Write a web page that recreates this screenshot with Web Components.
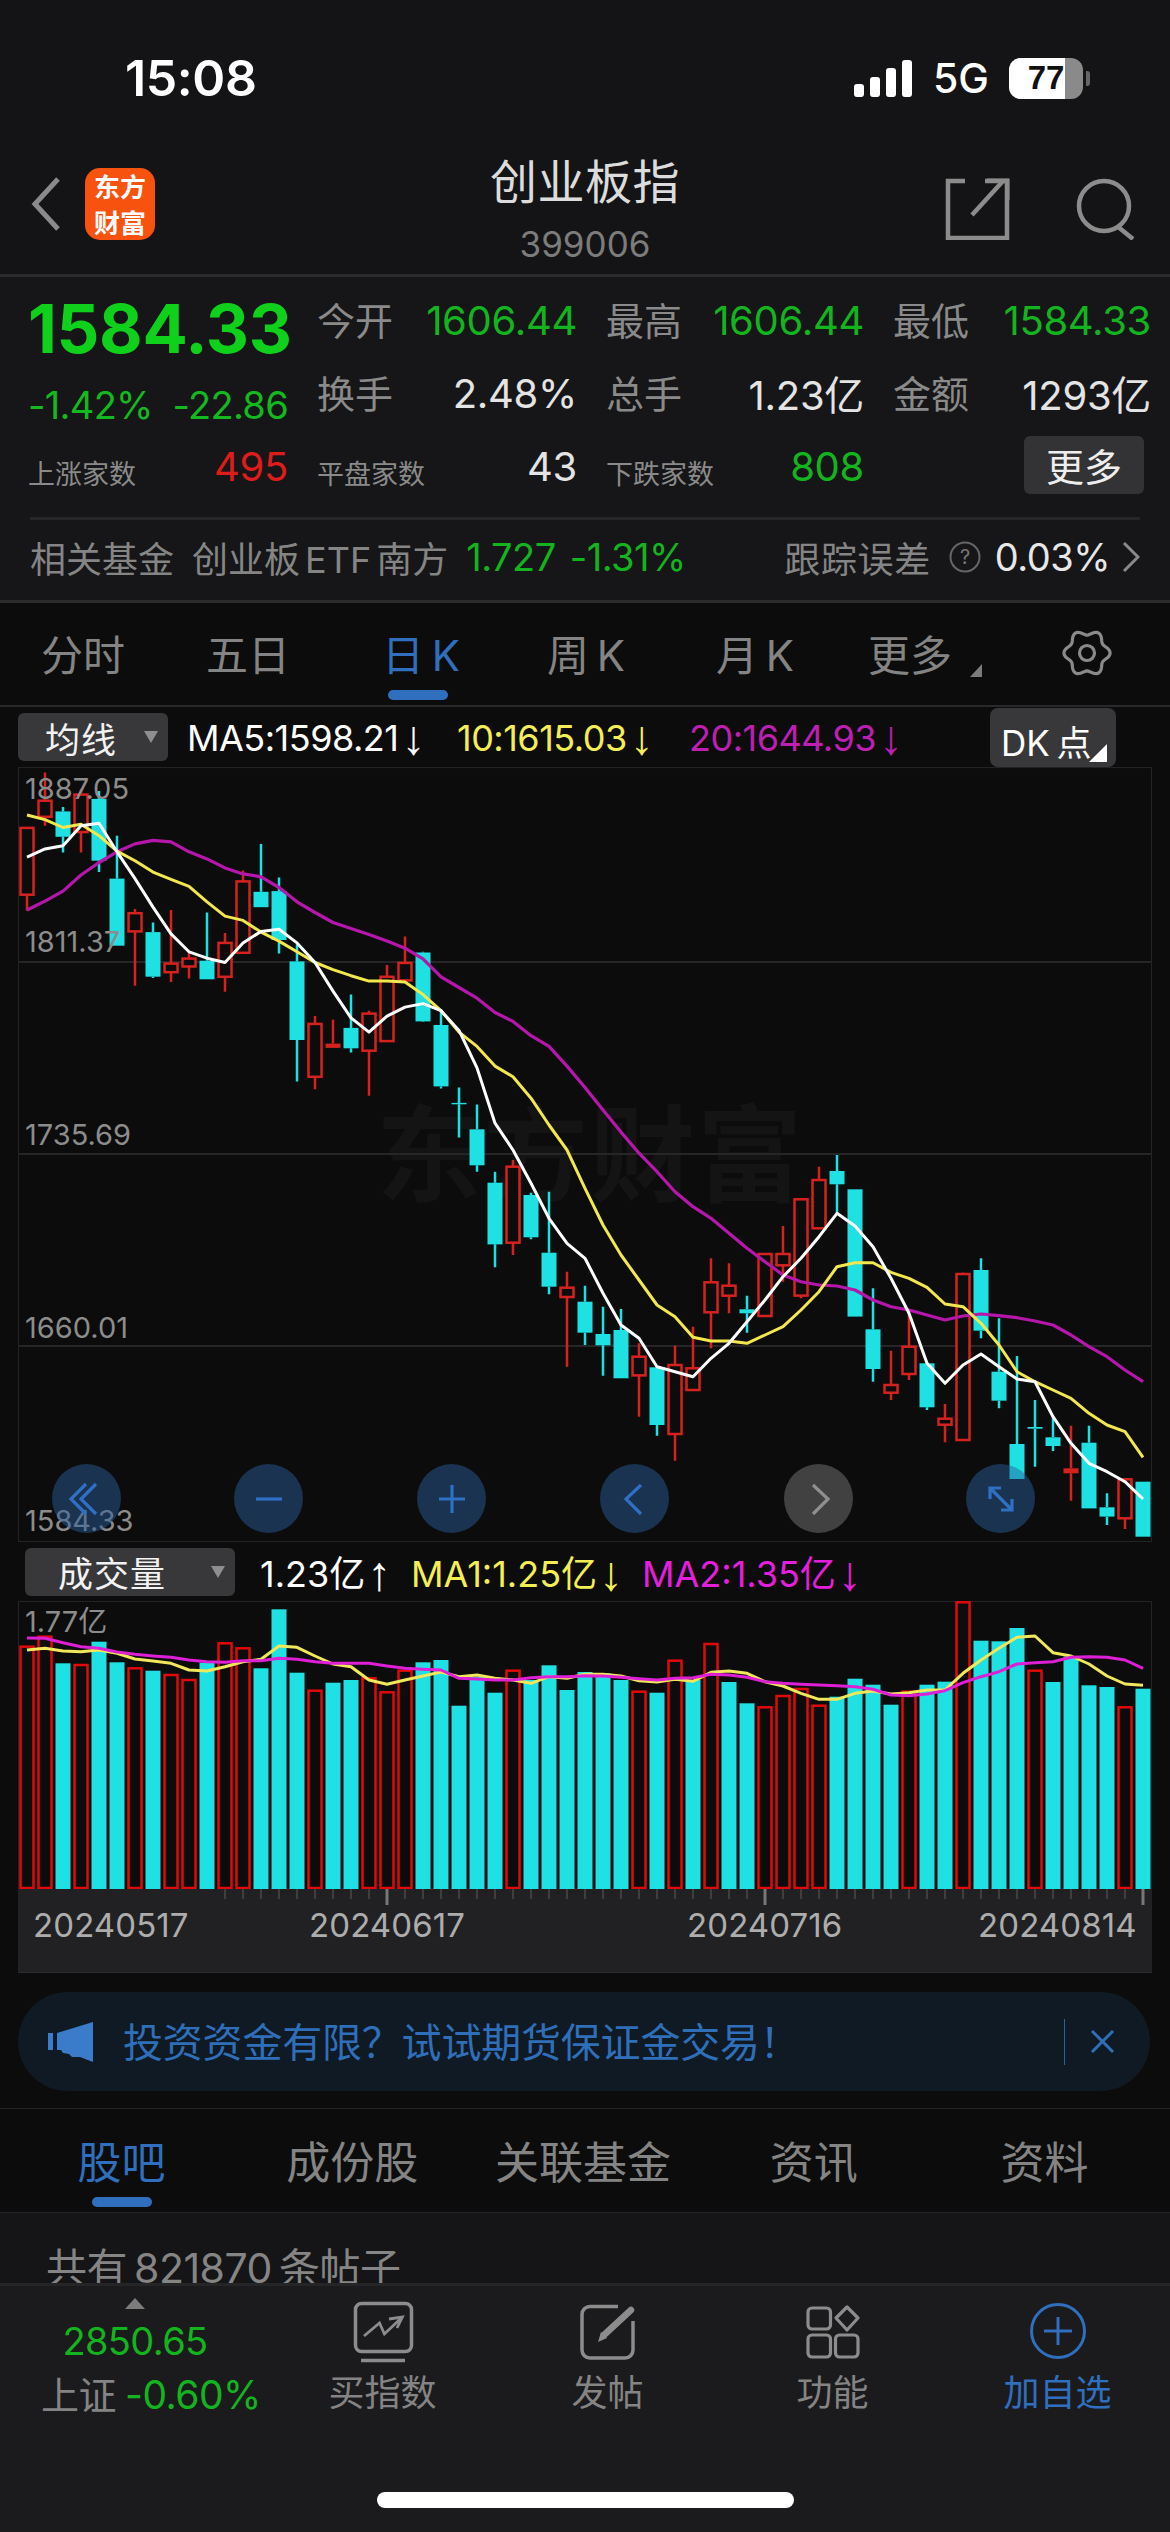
<!DOCTYPE html>
<html lang="zh">
<head>
<meta charset="utf-8">
<title>创业板指</title>
<style>
    html, body
    {
        margin: 0;
        padding: 0;
        background: #0c0c0c;
    }
    body
    {
        width: 1170px;
        height: 2532px;
        overflow: hidden;
        display: flex;
        flex-direction: column;
        font-family: Inter, "Noto Sans CJK SC", sans-serif;
        color: #fff;
    }
</style>
</head>
<body>
    <status-bar></status-bar>
    <quote-header></quote-header>

    <quote-stats>
        <stat-cell label="今开" tone="up">1606.44</stat-cell>
        <stat-cell label="最高" tone="up">1606.44</stat-cell>
        <stat-cell label="最低" tone="up">1584.33</stat-cell>
        <stat-cell label="换手">2.48%</stat-cell>
        <stat-cell label="总手">1.23亿</stat-cell>
        <stat-cell label="金额">1293亿</stat-cell>
        <stat-cell label="平盘家数" small>43</stat-cell>
        <stat-cell label="下跌家数" small tone="up">808</stat-cell>
    </quote-stats>

    <fund-row></fund-row>
    <period-tabs></period-tabs>
    <kline-panel></kline-panel>
    <volume-panel></volume-panel>
    <promo-banner>投资资金有限？试试期货保证金交易！</promo-banner>
    <info-tabs></info-tabs>
    <post-peek>共有 821870 条帖子</post-peek>
    <bottom-bar></bottom-bar>

<script>
// y positions were read off the reference, two source scales for the top chart
const ya = v => 600 + v / 2.8;
const yb = v => 1150 + v / 3;
const yv = v => 1540 + v / 3;
const cx = i => 27 + 18 * i;

const CYAN = '#1fe0e2';
const RED = '#d5221f';

// [up?, high, bodyTop, bodyBottom, low]
const CANDLES_A = [
    [1,638,638,825,870],[1,483,562,607,632],[0,580,592,663,707],[1,530,545,650,707],
    [0,535,557,730,762],[0,660,780,968,968],[1,865,877,928,1080],[0,903,930,1055,1058],
    [1,868,1018,1042,1070],[1,985,1004,1026,1060],[0,875,1010,1062,1062],[1,932,960,1055,1097],
    [1,757,788,988,990],[0,683,817,860,860],[0,777,815,952,990],[0,965,1012,1232,1348],
    [1,1165,1187,1335,1370],[2,1175,1242,1254,1254],[0,1105,1198,1255,1267],[1,1150,1158,1262,1388],
    [1,1022,1055,1235,1237],[1,942,1016,1065,1070],[0,985,987,1180,1182],[0,1145,1190,1362,1368],
    [0,1365,1408,1412,1505]
].map(c => [c[0], ya(c[1]), ya(c[2]), ya(c[3]), ya(c[4])]);

const CANDLE_25 = [0, ya(1413), ya(1482), yb(46), yb(65)];

const CANDLES_B = [
    [0,65,98,283,352],[1,30,50,278,315],[0,128,135,262,268],[0,125,308,410,433],
    [1,365,413,441,650],[0,407,455,548,585],[0,470,552,586,677],[0,477,540,685,685],
    [1,580,620,676,800],[0,650,652,825,857],[1,587,645,852,932],[1,530,655,720,722],
    [1,325,397,487,595],[1,340,407,437,490],[0,437,478,490,548],[1,310,312,498,500],
    [1,228,312,346,395],[1,145,148,437,445],[1,50,90,235,237],[0,15,63,103,190],
    [0,118,118,500,500],[0,415,538,657,695],[1,602,705,728,750],[1,490,590,672,690],
    [0,637,640,772,780],[1,762,806,824,877],[1,368,372,870,870],[0,325,360,542,565],
    [0,505,665,752,775],[0,618,882,987,987],[0,750,831,836,950],[0,800,862,888,903],
    [2,827,955,970,1052],[0,827,878,1075,1075],[0,1030,1072,1100,1125],[1,985,988,1105,1137],
    [0,995,995,1160,1160]
].map(c => [c[0], yb(c[1]), yb(c[2]), yb(c[3]), yb(c[4])]);

const CANDLES = [...CANDLES_A, CANDLE_25, ...CANDLES_B];

const MA5 = [
    ...[720,697,688,632,625,705,780,860,935,985,1003,1015,960,928,922,960,1015,1095,1170,1210,1165,1140,1130,1150,1205,1310,1465].map(ya),
    ...[0,100,205,280,325,430,525,565,650,665,680,625,580,515,450,380,325,260,190,228,290,385,490,640,700,645,612,650,687,695,800,880,940,965,995,1047].map(yb)
];
const MA10 = [
    ...[602,615,637,628,660,703,730,762,782,802,845,885,897,930,955,985,1015,1035,1052,1067,1067,1070,1105,1150,1210,1250,1305,1335,1395,1470,1540].map(ya),
    ...[115,225,315,390,465,500,562,573,573,580,555,530,480,425,350,338,338,367,385,412,462,470,520,585,665,695,720,745,790,825,845,922].map(yb)
];
const MA20 = [
    ...[868,843,815,770,735,705,683,673,677,705,725,750,767,775,805,845,875,903,920,937,955,975,1005,1055,1085,1115,1155,1180,1220,1250,1305,1365,1428,1490,1549].map(ya),
    ...[65,125,170,205,250,295,335,375,395,405,408,420,450,470,480,495,510,498,492,497,503,513,525,555,590,620,660,695].map(yb)
];

const VOL_UP = [1,1,0,1,0,0,1,0,1,1,0,1,1,0,0,0,1,0,0,1,1,1,0,0,0,0,0,1,0,0,0,0,0,0,1,0,1,0,1,0,0,1,1,1,1,0,0,0,0,1,0,0,1,0,0,0,1,0,0,0,0,1,0];
const VOL = [320,290,370,375,305,367,385,392,405,420,368,310,325,385,208,398,452,428,420,415,457,392,367,360,497,410,458,392,420,376,450,396,400,420,455,458,362,420,312,426,490,502,468,447,497,470,416,434,494,455,434,425,187,302,304,264,392,426,350,436,441,502,446];
const VOL_MA1 = [330,325,333,335,330,340,357,363,370,390,393,380,365,358,318,322,348,372,380,420,433,420,408,396,410,405,415,420,430,410,415,403,403,408,422,426,418,424,397,393,400,425,438,460,478,478,460,453,462,458,450,450,400,360,325,292,288,338,348,372,408,432,436];
const VOL_MA2 = [294,295,308,320,325,336,343,348,352,360,365,367,362,362,355,358,365,370,370,370,378,385,388,390,415,417,420,420,413,410,410,407,408,412,416,420,415,413,403,405,412,425,430,433,435,437,440,448,465,467,462,452,428,410,395,372,368,365,352,350,352,360,385];

function polyline(values, color, width)
{
    let pts = values.map((y, i) => `${cx(i)},${y.toFixed(1)}`).join(' ');
    return `<polyline points="${pts}" fill="none" stroke="${color}" stroke-width="${width}" stroke-linejoin="round"/>`;
}

function host(el, html)
{
    el.attachShadow({mode: 'open'}).innerHTML = html;
}


class StatusBar extends HTMLElement
{
    connectedCallback()
    {
        host(this, `
        <style>
            :host { display: flex; height: 130px; background: #141416; box-sizing: border-box; padding: 48px 80px 22px 125px; align-items: center; justify-content: space-between; color: #fff; }
            .time { font: 600 50px Inter, sans-serif; letter-spacing: -0.4px; }
            .right { display: flex; align-items: center; }
            .five { font: 500 41px Inter, sans-serif; margin: 0 20px 0 21px; }
            .batt { position: relative; width: 74px; height: 41px; border-radius: 12px; overflow: hidden; background: #8a8a8a; display: flex; align-items: center; justify-content: center; }
            .level { position: absolute; left: 0; top: 0; bottom: 0; width: 56px; background: #fff; }
            .pct { position: relative; font: 700 33px "Liberation Sans", sans-serif; color: #111; }
            .tip { width: 4px; height: 15px; margin-left: 3px; border-radius: 0 3px 3px 0; background: #666; }
        </style>
        <span class="time">15:08</span>
        <div class="right">
            <svg width="58" height="37" viewBox="0 0 58 37" fill="#fff">
                <rect x="0" y="24" width="10" height="13" rx="3"/>
                <rect x="16" y="17" width="10" height="20" rx="3"/>
                <rect x="32" y="8" width="10" height="29" rx="3"/>
                <rect x="48" y="0" width="10" height="37" rx="3"/>
            </svg>
            <span class="five">5G</span>
            <div class="batt"><div class="level"></div><span class="pct">77</span></div>
            <div class="tip"></div>
        </div>`);
    }
}
customElements.define('status-bar', StatusBar);


class QuoteHeader extends HTMLElement
{
    connectedCallback()
    {
        host(this, `
        <style>
            :host { display: grid; grid-template-columns: 300px 1fr 300px; height: 147px; box-sizing: border-box; background: #141416; border-bottom: 3px solid #2b2b2d; }
            .left { display: flex; align-items: center; padding: 8px 0 0 31px; gap: 24px; height: 140px; box-sizing: border-box; }
            .logo { width: 70px; height: 72px; border-radius: 15px; background: #f8520f; color: #fff; font: 700 26px/36px "Noto Sans CJK SC", sans-serif; text-align: center; }
            .mid { text-align: center; padding-top: 16px; }
            .title { font: 400 47px/66px "Noto Sans CJK SC", sans-serif; color: #dcdcdc; letter-spacing: 0.5px; }
            .code { font: 400 35px/42px Inter, sans-serif; color: #7c7c7c; margin-top: 11px; }
            .right { display: flex; align-items: center; justify-content: flex-end; padding: 18px 33px 0 0; gap: 65px; height: 140px; box-sizing: border-box; }
        </style>
        <div class="left">
            <svg width="30" height="54" viewBox="0 0 30 54" fill="none" stroke="#8a8a8a" stroke-width="5"><path d="M27 2 L4 27 L27 52"/></svg>
            <div class="logo">东方<br>财富</div>
        </div>
        <div class="mid">
            <div class="title">创业板指</div>
            <div class="code">399006</div>
        </div>
        <div class="right">
            <svg width="65" height="62" viewBox="0 0 65 62" fill="none" stroke="#8c8c8c" stroke-width="4.5">
                <path d="M20 3 H3 V60 H62 V3 H40"/>
                <path d="M27 37 L58 3"/>
                <path d="M42 2 H63 V22" stroke-width="3"/>
            </svg>
            <svg width="62" height="62" viewBox="0 0 62 62" fill="none" stroke="#8c8c8c" stroke-width="4.5">
                <circle cx="29" cy="28" r="25"/>
                <path d="M42 48 L58 61"/>
            </svg>
        </div>`);
    }
}
customElements.define('quote-header', QuoteHeader);


class StatCell extends HTMLElement
{
    connectedCallback()
    {
        let color = this.getAttribute('tone') === 'up' ? '#14b41f' : '#e4e4e4';
        let small = this.hasAttribute('small');
        host(this, `
        <style>
            :host { display: flex; align-items: center; justify-content: space-between; }
            .label { color: #8a8a8a; font: 400 ${small ? 27 : 38}px "Noto Sans CJK SC", sans-serif; ${small ? 'padding-top: 12px;' : 'margin-top: -4px;'} }
            .value { color: ${color}; font: 400 40px Inter, "Noto Sans CJK SC", sans-serif; letter-spacing: -0.3px; }
        </style>
        <span class="label">${this.getAttribute('label')}</span>
        <span class="value"><slot></slot></span>`);
    }
}
customElements.define('stat-cell', StatCell);


class QuoteStats extends HTMLElement
{
    connectedCallback()
    {
        // the cells keep their source order, each one goes to its grid slot
        let kids = [...this.children];
        ['a1', 'a2', 'a3', 'b1', 'b2', 'b3', 'c1', 'c2'].forEach((name, i) => kids[i].slot = name);

        host(this, `
        <style>
            :host { display: grid; grid-template-columns: 260px 260px 258px 258px; column-gap: 29px; grid-template-rows: 73px 72px 74px; height: 240px; box-sizing: border-box; padding: 7px 20px 0 28px; background: #161618; }
            .price { font: 700 67px/73px Inter, sans-serif; color: #0fd11c; padding-top: 8px; white-space: nowrap; letter-spacing: -0.3px; }
            .chg { font: 400 38px Inter, sans-serif; color: #13b91e; display: flex; justify-content: space-between; align-items: center; padding-top: 24px; letter-spacing: -0.7px; white-space: nowrap; }
            .rise { display: flex; justify-content: space-between; align-items: center; }
            .rise b { font: 400 27px "Noto Sans CJK SC", sans-serif; color: #8a8a8a; padding-top: 12px; }
            .rise i { font: 400 40px Inter, sans-serif; color: #de1c1c; letter-spacing: -0.3px; }
            button { justify-self: end; align-self: center; margin-top: -3px; margin-right: 7px; width: 120px; height: 58px; border: 0; border-radius: 6px; background: #333336; color: #eee; font: 400 38px "Noto Sans CJK SC", sans-serif; padding: 0; }
        </style>
        <div class="price">1584.33</div>
        <slot name="a1"></slot><slot name="a2"></slot><slot name="a3"></slot>
        <div class="chg"><span>-1.42%</span><span>-22.86</span></div>
        <slot name="b1"></slot><slot name="b2"></slot><slot name="b3"></slot>
        <div class="rise"><b>上涨家数</b><i>495</i></div>
        <slot name="c1"></slot><slot name="c2"></slot>
        <button>更多</button>`);
    }
}
customElements.define('quote-stats', QuoteStats);


class FundRow extends HTMLElement
{
    connectedCallback()
    {
        host(this, `
        <style>
            :host { display: block; height: 86px; box-sizing: border-box; background: #161618; padding: 0 30px; border-bottom: 3px solid #2b2b2d; }
            .row { display: flex; align-items: center; height: 83px; border-top: 3px solid #262628; box-sizing: border-box; padding-bottom: 6px; font: 400 36px Inter, "Noto Sans CJK SC", sans-serif; color: #858585; white-space: nowrap; }
            .fund { margin-left: 18px; }
            .fund i { font-style: normal; margin: 0 5px; }
            .g { color: #14b41f; margin-left: 18px; letter-spacing: -0.5px; font-size: 38px; }
            .g + .g { margin-left: 14px; }
            .trk { margin-left: auto; letter-spacing: 0.6px; }
            .w { color: #e8e8e8; margin-left: 14px; letter-spacing: -0.5px; font-size: 38px; }
            svg { margin-left: 18px; }
            svg + .w + svg { margin-left: 12px; }
        </style>
        <div class="row">
            <span>相关基金</span>
            <span class="fund">创业板<i>ETF</i>南方</span>
            <span class="g">1.727</span><span class="g">-1.31%</span>
            <span class="trk">跟踪误差</span>
            <svg width="32" height="32" viewBox="0 0 32 32"><circle cx="16" cy="16" r="14.5" fill="none" stroke="#666" stroke-width="2"/><text x="16" y="23" text-anchor="middle" font-family="Inter, sans-serif" font-size="20" fill="#777">?</text></svg>
            <span class="w">0.03%</span>
            <svg width="18" height="32" viewBox="0 0 18 32" fill="none" stroke="#8a8a8a" stroke-width="3"><path d="M2 2 L16 16 L2 30"/></svg>
        </div>`);
    }
}
customElements.define('fund-row', FundRow);


class PeriodTabs extends HTMLElement
{
    connectedCallback()
    {
        // wavy six lobed cog, lobes either side of the top
        let cog = [];
        for(let k = 0; k < 72; k++)
        {
            let t = k * Math.PI / 36;
            let r = 20.5 - 2.6 * Math.cos(6 * t);
            cog.push(`${(r * Math.sin(t)).toFixed(2)},${(-r * Math.cos(t)).toFixed(2)}`);
        }

        let tabs = [['分时', 166], ['五日', 164], ['日 K', 182, 1], ['周 K', 148], ['月 K', 190], ['更多', 120]];
        host(this, `
        <style>
            :host { display: flex; height: 104px; box-sizing: border-box; background: #0c0c0c; border-bottom: 2px solid #29292b; font: 400 42px Inter, "Noto Sans CJK SC", sans-serif; color: #848484; }
            .t { position: relative; display: flex; align-items: center; justify-content: center; height: 98px; white-space: nowrap; word-spacing: -4px; }
            .on { color: #2f6fbd; }
            .on::after { content: ""; position: absolute; left: 58px; width: 60px; bottom: 1px; height: 10px; border-radius: 5px; background: #2f6fbd; }
            .tri { position: absolute; right: -12px; bottom: 24px; width: 0; height: 0; border-left: 12px solid transparent; border-bottom: 13px solid #7c7c7c; }
            svg { margin: 0 0 2px 91px; align-self: center; }
        </style>
        ${tabs.map((t, i) => `<div class="t${t[2] ? ' on' : ''}" style="width:${t[1]}px">${t[0]}${i === 5 ? '<i class="tri"></i>' : ''}</div>`).join('')}
        <svg width="52" height="52" viewBox="-26 -26 52 52" fill="none" stroke="#8a8a8a" stroke-width="3.2" stroke-linejoin="round">
            <polygon points="${cog.join(' ')}"/>
            <circle r="7.5"/>
        </svg>`);
    }
}
customElements.define('period-tabs', PeriodTabs);


class ChartLegend extends HTMLElement
{
    connectedCallback()
    {
        host(this, `
        <style>
            :host { display: flex; align-items: center; position: relative; font: 400 36px Inter, "Noto Sans CJK SC", sans-serif; white-space: nowrap; background: #0c0c0c; letter-spacing: -0.5px; }
            ::slotted(*) { flex: none; }
        </style>
        <slot></slot>`);
    }
}
customElements.define('chart-legend', ChartLegend);


class LegendSelect extends HTMLElement
{
    connectedCallback()
    {
        host(this, `
        <style>
            :host { display: flex; align-items: center; position: relative; height: 48px; box-sizing: border-box; border-radius: 6px; background: #38383a; color: #f2f2f2; font: 400 35px "Noto Sans CJK SC", sans-serif; letter-spacing: 1px; }
            i { position: absolute; right: 10px; top: 18px; width: 0; height: 0; border-left: 7px solid transparent; border-right: 7px solid transparent; border-top: 12px solid #8e8e8e; }
        </style>
        <slot></slot><i></i>`);
    }
}
customElements.define('legend-select', LegendSelect);


class KlinePanel extends HTMLElement
{
    connectedCallback()
    {
        let marks = '';
        for(let i = 0; i < CANDLES.length; i++)
        {
            let [kind, high, top, bottom, low] = CANDLES[i];
            let x = cx(i);
            let color = kind ? RED : CYAN;
            marks += `<path d="M${x} ${high.toFixed(1)}V${top.toFixed(1)}M${x} ${bottom.toFixed(1)}V${low.toFixed(1)}" stroke="${color}" stroke-width="2.5"/>`;
            if(kind === 1) marks += `<rect x="${x - 6.5}" y="${top.toFixed(1)}" width="13" height="${(bottom - top).toFixed(1)}" fill="#0c0c0c" stroke="${RED}" stroke-width="2.5"/>`;
            else marks += `<rect x="${x - 7.5}" y="${top.toFixed(1)}" width="15" height="${(bottom - top).toFixed(1)}" fill="${color}"/>`;
        }

        let labels = [['1887.05', 10], ['1811.37', 163], ['1735.69', 356], ['1660.01', 549], ['1584.33', 742]];
        let btns = [
            [68, 'M23 9 L8 24 L23 39 M33 9 L18 24 L33 39', 'b'],
            [250, 'M11 24 H37', 'b'],
            [433, 'M11 24 H37 M24 10 V38', 'b'],
            [616, 'M30 10 L15 24 L30 39', 'b'],
            [800, 'M18 10 L33 24 L18 39', 'g'],
            [982, 'M13 13 L35 35 M13 24 V13 H24 M24 35 H35 V24', 'b']
        ];

        host(this, `
        <style>
            :host { display: block; background: #0c0c0c; }
            chart-legend { height: 60px; padding: 2px 0 0 18px; box-sizing: border-box; color: #fff; }
            legend-select { margin-top: -2px; }
            .e { width: 270px; }
            .a { font: 400 48px/36px "Liberation Sans", sans-serif; margin-left: 3px; vertical-align: -3px; }
            .dk { position: absolute; left: 990px; top: 1px; width: 126px; height: 59px; border-radius: 8px; background: #38383a; font: 400 35px Inter, "Noto Sans CJK SC", sans-serif; letter-spacing: 0; box-sizing: border-box; padding: 7px 0 0 11px; word-spacing: -3px; }
            .dk i { position: absolute; right: 9px; bottom: 5px; width: 0; height: 0; border-left: 18px solid transparent; border-bottom: 18px solid #fff; }
            .plot { position: relative; margin-left: 18px; width: 1134px; height: 775px; box-sizing: border-box; }
            svg.chart { position: absolute; left: 0; top: 0; }
            .wm { position: absolute; left: 358px; top: 304px; font: 700 105px "Noto Sans CJK SC", sans-serif; color: #141414; white-space: nowrap; letter-spacing: 2px; }
            .lab { position: absolute; left: 7px; font: 400 29px/34px Inter, sans-serif; color: #8c8c8c; }
            .btn { position: absolute; top: 697px; width: 69px; height: 69px; border-radius: 50%; display: flex; align-items: center; justify-content: center; }
            .b { background: rgba(42, 94, 156, 0.48); }
            .g { background: rgba(110, 110, 110, 0.55); }
        </style>
        <chart-legend>
            <legend-select style="width:150px;padding-left:27px">均线</legend-select>
            <span class="e" style="margin-left:19px">MA5:1598.21<span class="a">↓</span></span>
            <span class="e" style="width:232px;color:#f4ee55">10:1615.03<span class="a">↓</span></span>
            <span class="e" style="color:#bd1fb2">20:1644.93<span class="a">↓</span></span>
            <div class="dk">DK 点<i></i></div>
        </chart-legend>
        <div class="plot">
            <div class="wm">东方财富</div>
            <svg class="chart" width="1134" height="775" viewBox="18 767 1134 775">
                <rect x="18.5" y="767.5" width="1133" height="774" fill="none" stroke="#232325" stroke-width="1.2"/>
                <path d="M19 962H1151M19 1154H1151M19 1346H1151" stroke="#262628" stroke-width="2"/>
                ${marks}
                ${polyline(MA20, '#b517aa', 3.2)}
                ${polyline(MA10, '#f2e84e', 3)}
                ${polyline(MA5, '#ffffff', 3)}
            </svg>
            ${labels.map(l => `<span class="lab" style="top:${l[1] - 5}px">${l[0]}</span>`).join('')}
            ${btns.map(b => `<div class="btn ${b[2]}" style="left:${b[0] - 34}px"><svg width="48" height="48" viewBox="0 0 48 48" fill="none" stroke="${b[2] === 'g' ? '#8f8f8f' : '#2f6fc4'}" stroke-width="3.2"><path d="${b[1]}"/></svg></div>`).join('')}
        </div>`);
    }
}
customElements.define('kline-panel', KlinePanel);


class VolumePanel extends HTMLElement
{
    connectedCallback()
    {
        let bars = '';
        let ticks = '';
        let volRed = '#e00a0a';
        for(let i = 0; i < VOL.length; i++)
        {
            let x = cx(i);
            let top = yv(VOL[i]);
            if(VOL_UP[i]) bars += `<rect x="${x - 6.5}" y="${top.toFixed(1)}" width="13" height="${(1888 - top).toFixed(1)}" fill="#0c0c0c" stroke="${volRed}" stroke-width="2.5"/>`;
            else bars += `<rect x="${x - 7.5}" y="${top.toFixed(1)}" width="15" height="${(1889 - top).toFixed(1)}" fill="${CYAN}"/>`;
            if(i >= 11)
            {
                let major = i === 20 || i === 41 || i === 62;
                ticks += `<rect x="${x - (major ? 1.5 : 0.5)}" y="0" width="${major ? 3 : 1}" height="${major ? 16 : 10}" fill="${major ? '#777' : '#5c5c5c'}"/>`;
            }
        }

        let dates = [['20240517', 15], ['20240617', 291], ['20240716', 669], ['20240814', 960]];

        host(this, `
        <style>
            :host { display: block; background: #0c0c0c; }
            chart-legend { height: 59px; padding: 0 0 2px 25px; box-sizing: border-box; color: #fff; letter-spacing: 0; }
            legend-select { margin-top: 2px; }
            .e { flex: none; }
            .a { font: 400 48px/36px "Liberation Sans", sans-serif; margin-left: 2px; vertical-align: -3px; }
            .plot { position: relative; margin-left: 18px; width: 1134px; height: 288px; }
            svg.chart { position: absolute; left: 0; top: 0; }
            .lab { position: absolute; left: 7px; top: 3px; font: 400 29px/36px Inter, "Noto Sans CJK SC", sans-serif; color: #8c8c8c; }
            .axis { position: relative; margin-left: 18px; width: 1134px; height: 84px; background: #212123; border-bottom: 1px solid #2b2b2d; box-sizing: border-box; }
            .axis svg { position: absolute; left: 0; top: 0; }
            .axis span { position: absolute; top: 17px; font: 400 33px/38px Inter, sans-serif; color: #adadad; letter-spacing: 0.1px; }
        </style>
        <chart-legend>
            <legend-select style="width:210px;padding-left:33px">成交量</legend-select>
            <span class="e" style="margin-left:25px;width:151px">1.23亿<span class="a">↑</span></span>
            <span class="e" style="width:231px;color:#f4ee55">MA1:1.25亿<span class="a">↓</span></span>
            <span class="e" style="color:#e31fdc">MA2:1.35亿<span class="a">↓</span></span>
        </chart-legend>
        <div class="plot">
            <svg class="chart" width="1134" height="288" viewBox="18 1601 1134 288">
                <rect x="18.5" y="1601.5" width="1133" height="288" fill="none" stroke="#232325" stroke-width="1.2"/>
                ${bars}
                ${polyline(VOL_MA1.map(yv), '#f0e85a', 3)}
                ${polyline(VOL_MA2.map(yv), '#dd1fd6', 3)}
            </svg>
            <span class="lab">1.77亿</span>
        </div>
        <div class="axis">
            <svg width="1134" height="20" viewBox="18 0 1134 20">${ticks}</svg>
            ${dates.map(d => `<span style="left:${d[1]}px">${d[0]}</span>`).join('')}
        </div>`);
    }
}
customElements.define('volume-panel', VolumePanel);


class PromoBanner extends HTMLElement
{
    connectedCallback()
    {
        host(this, `
        <style>
            :host { display: flex; align-items: center; position: relative; height: 99px; margin: 19px 20px 17px 18px; padding-left: 29px; border-radius: 50px; background: #101a25; color: #2f6fb9; font: 400 40px "Noto Sans CJK SC", sans-serif; white-space: nowrap; box-sizing: border-box; }
            .spk { margin-right: 29px; flex: none; }
            .txt { flex: 1; letter-spacing: -0.2px; padding-bottom: 3px; }
            .sep { width: 1.5px; height: 46px; background: #2b5f9e; }
            .x { margin: 0 35px 0 25px; }
        </style>
        <svg class="spk" width="47" height="40" viewBox="0 0 47 40" fill="#3a7cc9">
            <rect x="1" y="11" width="5" height="17"/>
            <path d="M10 11 L46 0 V40 L33 35 L25 35 L22 32 L16 31 L14 28 H10 Z"/>
        </svg>
        <span class="txt"><slot></slot></span>
        <div class="sep"></div>
        <svg class="x" width="25" height="25" viewBox="0 0 25 25" stroke="#2f6fb9" stroke-width="3"><path d="M2 2 L23 23 M23 2 L2 23"/></svg>`);
    }
}
customElements.define('promo-banner', PromoBanner);


class InfoTabs extends HTMLElement
{
    connectedCallback()
    {
        let tabs = ['股吧', '成份股', '关联基金', '资讯', '资料'];
        host(this, `
        <style>
            :host { display: grid; grid-template-columns: repeat(5, 1fr); height: 105px; box-sizing: border-box; padding: 0 10px 0 6px; background: #0c0c0c; border-top: 1.5px solid #232325; border-bottom: 1.5px solid #232325; font: 400 44px "Noto Sans CJK SC", sans-serif; color: #848484; }
            div { position: relative; display: flex; align-items: center; justify-content: center; height: 102px; }
            .on { color: #2f6fbd; }
            .on::after { content: ""; position: absolute; left: 86px; width: 60px; bottom: 4px; height: 10px; border-radius: 5px; background: #2f6fbd; }
        </style>
        ${tabs.map((t, i) => `<div class="${i ? '' : 'on'}">${t}</div>`).join('')}`);
    }
}
customElements.define('info-tabs', InfoTabs);


class PostPeek extends HTMLElement
{
    connectedCallback()
    {
        host(this, `
        <style>
            :host { display: block; height: 70px; overflow: hidden; box-sizing: border-box; padding: 29px 0 0 46px; background: #151517; color: #858585; font: 400 41px/52px Inter, "Noto Sans CJK SC", sans-serif; letter-spacing: -0.5px; word-spacing: -4px; white-space: nowrap; }
        </style>
        <slot></slot>`);
    }
}
customElements.define('post-peek', PostPeek);


class BottomBar extends HTMLElement
{
    connectedCallback()
    {
        let items = [
            ['买指数', `<rect x="17.5" y="2.5" width="56" height="48" rx="6" stroke-width="3.5"/><path d="M23 59.5 H67" stroke-width="3.5"/><path d="M26 35 L41.5 22 L46.4 33 L64.4 16 M51 18 L64.4 16 L59 27" stroke-width="2.8"/>`],
            ['发帖', `<path d="M55 5.5 H27 A8 8 0 0 0 19 13.5 V49 A8 8 0 0 0 27 57 H62 A8 8 0 0 0 70 49 V20" stroke-width="3.5"/><path d="M41 34 L68 9" stroke-width="6.5" stroke-linecap="round"/><path d="M35 41 L38 31 L44 37 Z" fill="#8c8c8c" stroke="none"/>`],
            ['功能', `<rect x="20" y="7" width="22.5" height="21" rx="4" stroke-width="3.2"/><rect x="20" y="34" width="22.5" height="22" rx="4" stroke-width="3.2"/><rect x="47.5" y="34" width="22.5" height="22" rx="4" stroke-width="3.2"/><path d="M59 6 L70 17 L59 29 L48 17 Z" stroke-width="3.2" stroke-linejoin="round"/>`],
            ['加自选', `<circle cx="45" cy="30" r="26.5" stroke-width="3"/><path d="M31 30 H59 M45 16 V44" stroke-width="3"/>`, 1]
        ];
        host(this, `
        <style>
            :host { display: grid; grid-template-columns: 270px repeat(4, 225px); height: 249px; box-sizing: border-box; background: #1b1b1d; border-top: 3px solid #252527; position: relative; font-family: Inter, "Noto Sans CJK SC", sans-serif; }
            .idx { position: relative; color: #14b41f; }
            .tri { position: absolute; left: 125px; top: 12px; width: 0; height: 0; border-left: 10px solid transparent; border-right: 10px solid transparent; border-bottom: 11px solid #7c7c7c; }
            .n { font: 400 38px/42px Inter, sans-serif; margin-top: 34px; letter-spacing: -0.6px; text-align: center; }
            .p { font: 400 39px/42px Inter, "Noto Sans CJK SC", sans-serif; margin-top: 10px; padding-left: 41px; white-space: nowrap; letter-spacing: -0.5px; }
            .p b { font: 400 38px/42px "Noto Sans CJK SC", sans-serif; color: #848484; margin-right: 9px; }
            .item { display: flex; flex-direction: column; align-items: center; color: #848484; font: 400 36px/42px "Noto Sans CJK SC", sans-serif; padding-top: 15px; }
            .item svg { margin-bottom: 6px; }
            .on { color: #2f6fbd; }
            .home { position: absolute; left: 377px; top: 206px; width: 417px; height: 16px; border-radius: 8px; background: #fff; }
        </style>
        <div class="idx">
            <i class="tri"></i>
            <div class="n">2850.65</div>
            <div class="p"><b>上证</b>-0.60%</div>
        </div>
        ${items.map(it => `<div class="item${it[2] ? ' on' : ''}">
            <svg width="90" height="62" viewBox="0 0 90 62" fill="none" stroke="${it[2] ? '#2f6fbd' : '#8c8c8c'}">${it[1]}</svg>
            <span>${it[0]}</span>
        </div>`).join('')}
        <div class="home"></div>`);
    }
}
customElements.define('bottom-bar', BottomBar);
</script>
</body>
</html>
